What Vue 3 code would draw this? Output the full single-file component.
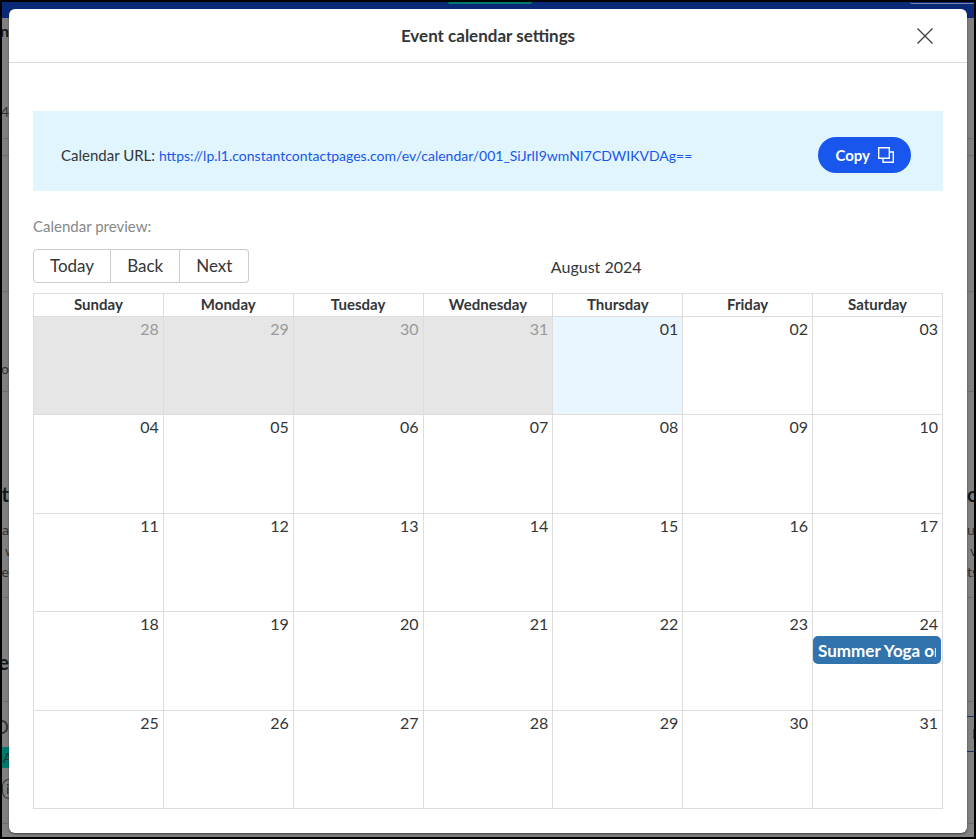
<template>
  <div class="screen">
    <div class="page" aria-hidden="true">
      <div class="topbar">
        <span class="topbar__tab"></span>
        <span class="topbar__pill"></span>
      </div>
      <div class="strip strip--title">
        <div class="edge edge--left"><b class="small-title">n</b><span>4</span></div>
      </div>
      <div class="strip strip--thin"></div>
      <div class="strip strip--filters"></div>
      <div class="strip strip--tabs">
        <div class="edge edge--left">o</div>
      </div>
      <div class="strip strip--intro">
        <div class="edge edge--left"><b>t</b><span>a</span><span class="indent">w</span><span>e</span></div>
        <div class="edge"><b>o</b><span>u</span><span class="indent">v</span><span>ts</span></div>
      </div>
      <div class="strip strip--heading">
        <div class="edge edge--left"><b>e</b></div>
      </div>
      <div class="strip strip--item">
        <div class="edge edge--left"><span class="item-name">D</span><span class="tag">A</span><span class="info">i</span></div>
        <div class="edge"><span class="outline-btn">E</span></div>
      </div>
    </div>

    <section class="modal" role="dialog" aria-labelledby="modal-title">
      <header class="modal__header">
        <h1 id="modal-title">Event calendar settings</h1>
        <button class="close" type="button" aria-label="Close">
          <svg viewBox="0 0 16 16" width="16" height="16" fill="none" stroke="#3b3e40" stroke-width="1.3">
            <path d="M.5.5l15 15M15.5.5l-15 15" />
          </svg>
        </button>
      </header>

      <div class="modal__body">
        <div class="url-box">
          <p class="url-box__text">
            Calendar URL:
            <a :href="calendarUrl">{{ calendarUrl }}</a>
          </p>
          <button class="copy" type="button">
            Copy
            <svg viewBox="0 0 16 16" width="16" height="16" fill="none" stroke="#fff" stroke-width="1.4">
              <path d="M.7.7h10.6v10.6H.7z" />
              <path d="M11.3 5h4v10.3H5v-4" />
            </svg>
          </button>
        </div>

        <p class="preview-label">Calendar preview:</p>

        <div class="toolbar">
          <div class="btn-group">
            <button v-for="name in ['Today', 'Back', 'Next']" :key="name" type="button">{{ name }}</button>
          </div>
          <span class="toolbar__label">August 2024</span>
        </div>

        <table class="calendar">
          <thead>
            <tr>
              <th v-for="day in weekdays" :key="day" scope="col">{{ day }}</th>
            </tr>
          </thead>
          <tbody>
            <tr v-for="(week, i) in weeks" :key="i">
              <td v-for="cell in week" :key="cell.key" :class="{ 'off-range': cell.off, today: cell.today }">
                <div class="date">{{ cell.label }}</div>
                <button v-if="cell.event" class="event" type="button">
                  <span>{{ cell.event }}</span>
                </button>
              </td>
            </tr>
          </tbody>
        </table>
      </div>
    </section>
  </div>
</template>

<script setup>
const calendarUrl = 'https://lp.l1.constantcontactpages.com/ev/calendar/001_SiJrlI9wmNI7CDWIKVDAg=='

const weekdays = ['Sunday', 'Monday', 'Tuesday', 'Wednesday', 'Thursday', 'Friday', 'Saturday']

const events = { 24: 'Summer Yoga on the Lawn' }

// The first row starts on July 28
const days = Array.from({ length: 35 }, (_, i) => {
  const off = i < 4
  const date = off ? 28 + i : i - 3
  return {
    key: i,
    off,
    today: i === 4,
    label: String(date).padStart(2, '0'),
    event: off ? null : events[date]
  }
})

const weeks = [0, 1, 2, 3, 4].map(w => days.slice(w * 7, w * 7 + 7))
</script>

<style>
body {
  background: #808080;
}
</style>

<style scoped>
.screen {
  position: relative;
  box-sizing: border-box;
  min-height: 100vh;
  padding: 7px 7px 4px;
  border: 2px solid #000;
  overflow: hidden;
  background: #808080;
  color: #333638;
  font-family: Lato, "Liberation Sans", sans-serif;
  font-size: 16px;
}

button {
  font: inherit;
  color: inherit;
  cursor: pointer;
}

/* Dimmed page behind the dialog */
.page {
  position: absolute;
  inset: 0;
  font-size: 14px;
  line-height: 21px;
  color: #303234;
}

.topbar {
  display: flex;
  justify-content: flex-end;
  height: 16px;
  background: #0a2a78;
}

.topbar__tab {
  width: 84px;
  height: 2px;
  margin-right: 378px;
  border-radius: 0 0 8px 8px;
  background: #007a6c;
}

.topbar__pill {
  width: 64px;
  height: 2px;
  box-sizing: border-box;
  border-bottom: 1px solid #7b85a5;
  border-radius: 0 0 0 8px;
}

.strip {
  display: flex;
  justify-content: space-between;
  box-sizing: border-box;
  border-bottom: 1px solid #6c6c6c;
}

.strip--title { height: 121px; }
.strip--thin { height: 17px; }
.strip--filters { height: 136px; }
.strip--tabs { height: 100px; padding-top: 66px; }
.strip--intro { height: 206px; padding-top: 92px; }
.strip--heading { height: 104px; padding-top: 54px; }
.strip--item { height: 122px; padding-top: 14px; }

.edge {
  display: flex;
  flex-direction: column;
  width: 7px;
  overflow: hidden;
}

.edge--left {
  align-items: flex-end;
}

.edge .indent {
  align-self: flex-start;
  padding-left: 3px;
}

.edge b {
  margin-bottom: 14px;
  font-size: 20px;
  color: #161718;
}

.edge .small-title {
  margin: 2px 0 60px;
  font-size: 16px;
}

.item-name {
  margin-bottom: 10px;
  font-size: 20px;
}

.tag {
  align-self: stretch;
  margin-bottom: 11px;
  padding-left: 1px;
  background: #007a6c;
}

.info {
  align-self: stretch;
  padding-left: 3px;
  border: 1px solid #303234;
  border-right: 0;
  border-radius: 10px 0 0 10px;
  line-height: 18px;
}

.outline-btn {
  padding-left: 5px;
  border: 1px solid #142f7c;
  border-width: 1px 0;
  line-height: 34px;
}

.modal {
  position: relative;
  border-radius: 6px;
  background: #fff;
  box-shadow: 0 1px 2px rgba(0, 0, 0, 0.5);
}

.modal__header {
  display: flex;
  align-items: center;
  justify-content: space-between;
  height: 53px;
  padding: 0 30px;
  border-bottom: 1px solid #d9dbdd;
}

.modal__header::before {
  content: '';
  width: 24px;
}

.modal__header h1 {
  margin: 0;
  font-size: 17px;
  font-weight: 700;
}

.close {
  display: flex;
  padding: 4px;
  border: 0;
  background: none;
}

.modal__body {
  padding: 48px 24px 24px;
}

.url-box {
  display: flex;
  align-items: center;
  justify-content: space-between;
  min-height: 80px;
  box-sizing: border-box;
  padding: 8px 32px 0 28px;
  background: #e1f5fe;
}

.url-box__text {
  margin: 0;
  font-size: 15px;
}

.url-box__text a {
  color: #1856ed;
  font-size: 14px;
  text-decoration: none;
}

.copy {
  display: flex;
  align-items: center;
  gap: 8px;
  height: 36px;
  padding: 0 17px;
  border: 0;
  border-radius: 18px;
  background: #1856ed;
  color: #fff;
  font-size: 15px;
  font-weight: 700;
}

.preview-label {
  margin: 24px 0 12px;
  font-size: 15px;
  line-height: 22px;
  color: #85888a;
}

.toolbar {
  display: flex;
  align-items: center;
  margin-bottom: 10px;
}

.toolbar__label {
  flex: 1;
  text-align: center;
}

.btn-group {
  display: flex;
}

.btn-group button {
  height: 34px;
  padding: 0 16px;
  border: 1px solid #ccc;
  background: #fff;
  font-size: 17px;
  line-height: 32px;
}

.btn-group button + button {
  border-left: 0;
}

.btn-group button:first-child {
  border-radius: 4px 0 0 4px;
}

.btn-group button:last-child {
  border-radius: 0 4px 4px 0;
}

.calendar {
  width: 100%;
  height: 516px;
  border-collapse: collapse;
  table-layout: fixed;
}

.calendar th,
.calendar td {
  padding: 0;
  border: 1px solid #ddd;
}

.calendar th {
  height: 22px;
  font-size: 15px;
  font-weight: 700;
  line-height: 20px;
  vertical-align: top;
}

.calendar td {
  height: 97px;
  vertical-align: top;
}

.date {
  padding-right: 4px;
  line-height: 24px;
  text-align: right;
}

.off-range {
  background: #e6e6e6;
  color: #999;
}

.today {
  background: #eaf6ff;
}

.event {
  display: block;
  width: calc(100% - 1px);
  height: 28px;
  padding: 0 5px;
  border: 0;
  border-radius: 5px;
  background: #3174ad;
  color: #fff;
  font-size: 17px;
  font-weight: 700;
  text-align: left;
}

.event span {
  display: block;
  overflow: hidden;
  white-space: nowrap;
}
</style>
